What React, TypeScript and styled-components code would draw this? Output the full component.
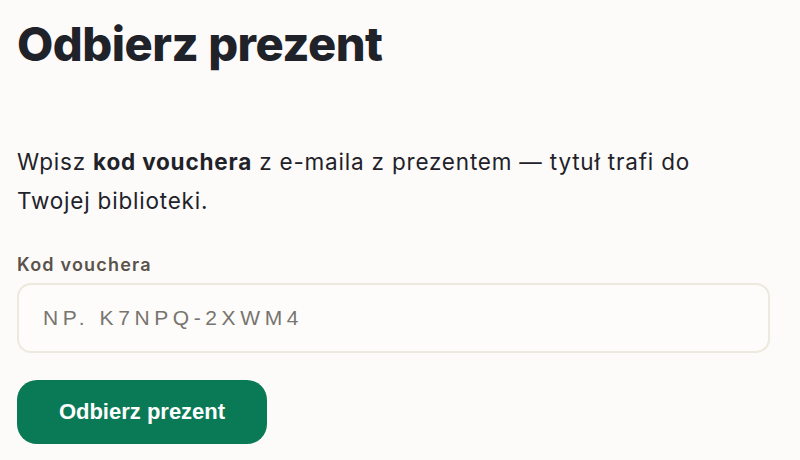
import styled, { createGlobalStyle } from "styled-components";

const GlobalStyle = createGlobalStyle`
  html, body {
    margin: 0;
    padding: 0;
    background: #fcfbf9;
  }
  body {
    font-family: Inter, "Noto Sans", sans-serif;
    color: #1f2229;
  }
`;

const Page = styled.main`
  padding: 12px 30px 0 17px;
  max-width: 753px;
`;

const Title = styled.h1`
  margin: 0;
  font-size: 47px;
  font-weight: 800;
  letter-spacing: -0.5px;
  line-height: 64px;
  color: #1f2229;
`;

const Lead = styled.p`
  margin: 66px 0 0;
  max-width: 730px;
  font-size: 22.5px;
  letter-spacing: 0.8px;
  line-height: 39px;
  color: #1f2229;

  strong {
    font-weight: 700;
  }
`;

const Field = styled.label`
  display: flex;
  flex-direction: column;
  gap: 8px;
  margin-top: 34px;
`;

const Label = styled.span`
  font-size: 18px;
  font-weight: 600;
  letter-spacing: 1.2px;
  color: #5a524b;
`;

const Input = styled.input`
  box-sizing: border-box;
  width: 100%;
  height: 70px;
  padding: 0 24px;
  border: 2px solid #ece9de;
  border-radius: 14px;
  background: #fdfcfa;
  font-family: "Liberation Sans", Arial, sans-serif;
  font-size: 21px;
  letter-spacing: 4.6px;
  color: #1f2229;
  outline: none;

  &::placeholder {
    color: #78746f;
  }
`;

const Submit = styled.button`
  margin-top: 27px;
  width: 250px;
  height: 64px;
  border: none;
  border-radius: 20px;
  background: #0a7a56;
  color: #ffffff;
  font-family: "Liberation Sans", Arial, sans-serif;
  font-size: 22px;
  font-weight: 700;
  cursor: pointer;
`;

export default function App() {
  return (
    <>
      <GlobalStyle />
      <Page>
        <Title>Odbierz prezent</Title>
        <Lead>
          Wpisz <strong>kod vouchera</strong> z e-maila z prezentem — tytuł
          trafi do Twojej biblioteki.
        </Lead>
        <Field>
          <Label>Kod vouchera</Label>
          <Input placeholder="NP. K7NPQ-2XWM4" />
        </Field>
        <Submit type="button">Odbierz prezent</Submit>
      </Page>
    </>
  );
}
